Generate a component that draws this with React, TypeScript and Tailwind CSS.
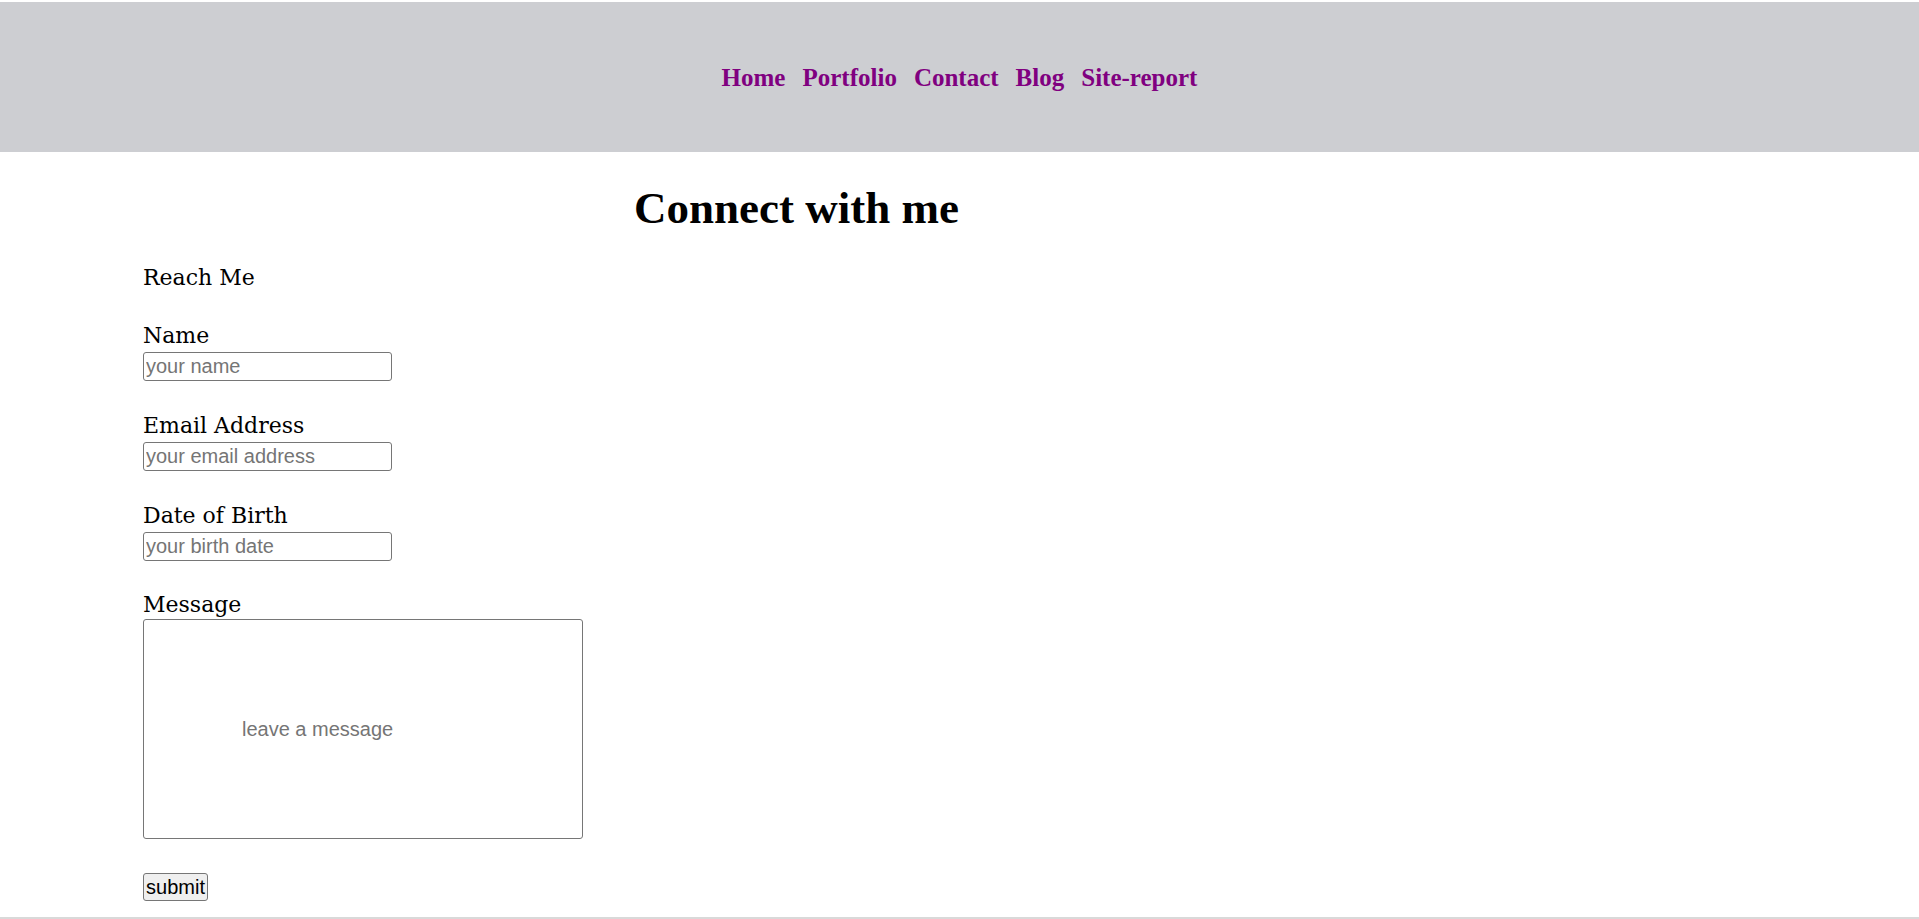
import React from "react";

const serif = { fontFamily: '"DejaVu Serif", serif' };

function Field({ label, placeholder, top }: { label: string; placeholder: string; top: string }) {
  return (
    <div className={top}>
      <label className="block text-[22px] leading-[26px] text-black font-['DejaVu_Serif',serif]">{label}</label>
      <input
        type="text"
        placeholder={placeholder}
        className="mt-[3px] block h-[29px] w-[249px] rounded-[3px] border border-[#767676] bg-white px-[2px] text-[20px] leading-[23px] font-['Liberation_Sans',Arial,sans-serif] text-black placeholder:text-[#757575] outline-none"
      />
    </div>
  );
}

export default function App() {
  return (
    <div className="min-h-screen bg-white pt-[2px]" style={serif}>
      <header className="flex h-[150px] items-center justify-center bg-[#cdced2] pt-[2px]">
        <nav className="flex gap-[17px] text-[25px] font-bold leading-[30px] text-[#800080] font-['Liberation_Serif',serif]">
          <a href="#">Home</a>
          <a href="#">Portfolio</a>
          <a href="#">Contact</a>
          <a href="#">Blog</a>
          <a href="#">Site-report</a>
        </nav>
      </header>
      <main className="pl-[143px]">
        <h1 className="ml-[491px] mt-[30px] text-[45px] font-bold leading-[52px] text-black font-['Liberation_Serif',serif]">
          Connect with me
        </h1>
        <p className="mt-[31px] text-[22px] leading-[26px] text-black font-['DejaVu_Serif',serif]">Reach Me</p>
        <form onSubmit={(e) => e.preventDefault()}>
          <Field label="Name" placeholder="your name" top="mt-[32px]" />
          <Field label="Email Address" placeholder="your email address" top="mt-[32px]" />
          <Field label="Date of Birth" placeholder="your birth date" top="mt-[32px]" />
          <div className="mt-[31px]">
            <label className="block text-[22px] leading-[26px] text-black font-['DejaVu_Serif',serif]">Message</label>
            <textarea
              placeholder="leave a message"
              className="mt-px block h-[220px] w-[440px] resize-none rounded-[3px] border border-[#767676] bg-white pl-[98px] pt-[98px] text-[20px] leading-[23px] font-['Liberation_Sans',Arial,sans-serif] placeholder:text-[#757575] outline-none"
            />
          </div>
          <button
            type="submit"
            className="mt-[34px] block h-[28px] w-[65px] rounded-[3px] border border-[#767676] bg-[#efefef] px-[2px] text-[20px] leading-[23px] text-black font-['Liberation_Sans',Arial,sans-serif]"
          >
            submit
          </button>
        </form>
      </main>
      <footer className="mt-[16px] h-[40px] bg-[#d9d9d9]" />
    </div>
  );
}
